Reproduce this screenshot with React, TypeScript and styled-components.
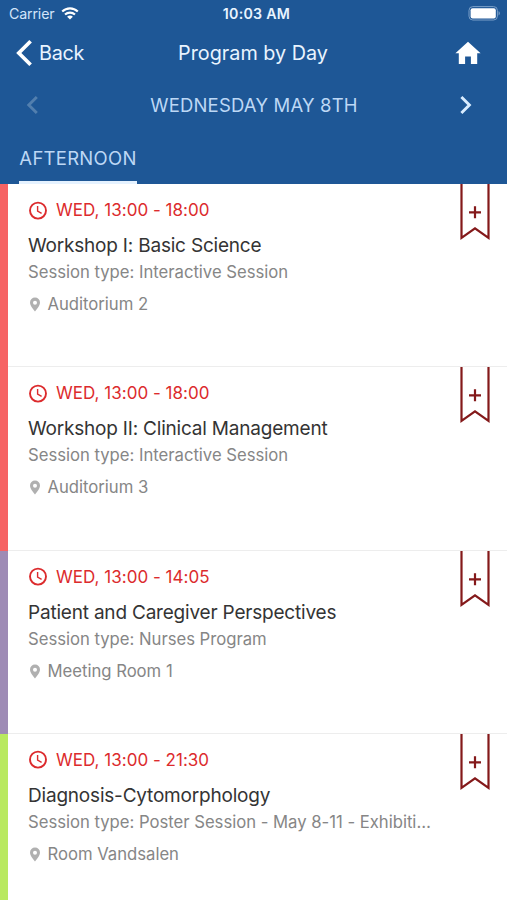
import React from "react";
import styled, { createGlobalStyle } from "styled-components";

const GlobalStyle = createGlobalStyle`
  * { box-sizing: border-box; }
  body {
    margin: 0;
    background: #fff;
    font-family: Inter, "Open Sans", sans-serif;
    font-kerning: normal;
  }
  h1, h2, p { margin: 0; font-weight: 400; }
  button { margin: 0; padding: 0; border: 0; background: none; font: inherit; color: inherit; }
  svg { display: block; flex: none; }
`;

const Screen = styled.main`
  width: 507px;
  height: 900px;
  overflow: hidden;
  display: flex;
  flex-direction: column;
  background: #fff;
`;

const Header = styled.header`
  flex: none;
  height: 184px;
  display: flex;
  flex-direction: column;
  background: #1e5796;
  color: #e9f4ff;
`;

const StatusBar = styled.div`
  height: 27px;
  padding: 0 7px 0 9px;
  display: grid;
  grid-template-columns: 1fr auto 1fr;
  align-items: center;
  font-size: 14.2px;
`;

const Carrier = styled.div`
  display: flex;
  align-items: center;
  gap: 7px;
  letter-spacing: -0.15px;
  color: #d3e5fa;
`;

const Clock = styled.div`
  padding-left: 4px;
  font-weight: 600;
  letter-spacing: 0.28px;
`;

const Battery = styled.div`
  justify-self: end;
`;

const NavBar = styled.div`
  height: 51px;
  padding: 0 26px 0 16px;
  display: grid;
  grid-template-columns: 1fr auto 1fr;
  align-items: center;
  font-size: 19.8px;
`;

const BackButton = styled.button`
  display: flex;
  align-items: center;
  gap: 6px;
  letter-spacing: -0.3px;
`;

const ScreenTitle = styled.h1`
  font-size: 19.8px;
  line-height: 26px;
  padding-left: 9px;
`;

const HomeButton = styled.button`
  justify-self: end;
`;

const DayBar = styled.div`
  height: 54px;
  padding: 0 35px 0 26px;
  display: grid;
  grid-template-columns: 1fr auto 1fr;
  align-items: center;
`;

const DayName = styled.h2`
  padding-left: 10px;
  font-size: 18.5px;
  line-height: 24px;
  letter-spacing: 0.17px;
  color: #bdd8f5;
`;

const DayArrow = styled.button<{ $dim?: boolean }>`
  justify-self: ${(p) => (p.$dim ? "start" : "end")};
  color: ${(p) => (p.$dim ? "#527fae" : "#d9ecff")};
`;

const Tabs = styled.nav`
  flex: 1;
  padding-left: 19px;
  display: flex;
`;

const Tab = styled.button`
  width: 118px;
  padding-top: 3px;
  border-bottom: 3px solid #e5f2ff;
  font-size: 18.5px;
  letter-spacing: 0.27px;
  white-space: nowrap;
  color: #bdd8f5;
`;

const SessionRow = styled.article<{ $bar: string }>`
  position: relative;
  flex: none;
  height: 183.3px;
  display: flex;
  &::before {
    content: "";
    width: 8px;
    background: ${(p) => p.$bar};
  }
`;

const SessionBody = styled.div`
  flex: 1;
  min-width: 0;
  padding: 14px 70px 0 20px;
  border-bottom: 1px solid #ededed;
  white-space: nowrap;
`;

const Time = styled.div`
  height: 24px;
  display: flex;
  align-items: center;
  gap: 9px;
  font-size: 17px;
  letter-spacing: 0.02px;
  color: #dc2b2d;
`;

const SessionTitle = styled.h2`
  margin-top: 11px;
  font-size: 19px;
  line-height: 26px;
  letter-spacing: -0.2px;
  color: #343434;
`;

const SessionType = styled.p`
  font-size: 16.7px;
  line-height: 27px;
  letter-spacing: -0.02px;
  color: #868686;
`;

const Place = styled.p`
  margin-top: 6px;
  height: 24px;
  display: flex;
  align-items: center;
  gap: 6.5px;
  font-size: 16.7px;
  letter-spacing: -0.02px;
  color: #868686;
`;

const BookmarkButton = styled.button`
  position: absolute;
  top: 0;
  right: 16px;
`;

const WifiIcon = () => (
  <svg width="18" height="13" viewBox="0 0 18 13" fill="none" stroke="#fff" strokeWidth="2.1">
    <path d="M1.2 4.6C5.6.3 12.4.3 16.8 4.6" />
    <path d="M4 7.6c2.9-2.7 7.1-2.7 10 0" />
    <path d="M6.1 9.7c1.7-1.5 4.1-1.5 5.8 0L9 12.6z" fill="#fff" stroke="none" />
  </svg>
);

const BatteryIcon = () => (
  <svg width="32" height="15" viewBox="0 0 32 15">
    <rect x="1" y="0.6" width="28.4" height="13.4" rx="3.8" fill="none" stroke="#7a9fc8" strokeWidth="1" />
    <rect x="2.6" y="2.2" width="25.2" height="10.2" rx="2" fill="#fff" />
    <path d="M30.6 5.2c1.5.6 1.5 3.6 0 4.2z" fill="#8cadd0" />
  </svg>
);

const BackIcon = () => (
  <svg width="17" height="26" viewBox="0 0 17 26" fill="none" stroke="#fff" strokeWidth="3.7">
    <path d="M14.6 1.3 2.8 13l11.8 11.7" />
  </svg>
);

const HomeIcon = () => (
  <svg width="26" height="24" viewBox="0 0 26 24">
    <path d="M13 .8.4 12.2h3.4v10.9h6.3v-7.5h5.8v7.5h6.3V12.2h3.4z" fill="#fff" />
  </svg>
);

const ChevronIcon = ({ left }: { left?: boolean }) => (
  <svg width="13" height="20" viewBox="0 0 13 20" fill="none" stroke="currentColor" strokeWidth="2.9">
    <path d={left ? "M10.8 2 2.8 10l8 8" : "M2.4 2l8 8-8 8"} />
  </svg>
);

const ClockIcon = () => (
  <svg width="19" height="19" viewBox="0 0 19 19" fill="none" stroke="#dc2b2d">
    <circle cx="10" cy="9.6" r="8" strokeWidth="1.9" />
    <path d="M9.6 5v5l4 2.4" strokeWidth="1.4" />
  </svg>
);

const PinIcon = () => (
  <svg width="13" height="16" viewBox="0 0 13 16">
    <path
      d="M7 1.6a5 5 0 0 0-5 5c0 3.6 5 9 5 9s5-5.4 5-9a5 5 0 0 0-5-5zm0 3.1a2 2 0 1 1 0 4 2 2 0 0 1 0-4z"
      fill="#b0b0b0"
      fillRule="evenodd"
    />
  </svg>
);

const RibbonIcon = () => (
  <svg width="32" height="57" viewBox="0 0 32 57" fill="none" stroke="#84191a" strokeWidth="2.2">
    <path d="M2.5-2v55.9L16 44.3l13.5 9.6V-2" />
    <path d="M10 28.3h12M16 22.3v12" />
  </svg>
);

const sessions = [
  { bar: "#f66364", time: "WED, 13:00 - 18:00", title: "Workshop I: Basic Science", type: "Interactive Session", place: "Auditorium 2" },
  { bar: "#f66364", time: "WED, 13:00 - 18:00", title: "Workshop II: Clinical Management", type: "Interactive Session", place: "Auditorium 3" },
  { bar: "#9e8bb5", time: "WED, 13:00 - 14:05", title: "Patient and Caregiver Perspectives", type: "Nurses Program", place: "Meeting Room 1" },
  { bar: "#b9e960", time: "WED, 13:00 - 21:30", title: "Diagnosis-Cytomorphology", type: "Poster Session - May 8-11 - Exhibiti…", place: "Room Vandsalen" },
];

export default function App() {
  return (
    <Screen>
      <GlobalStyle />
      <Header>
        <StatusBar>
          <Carrier>
            Carrier <WifiIcon />
          </Carrier>
          <Clock>10:03 AM</Clock>
          <Battery>
            <BatteryIcon />
          </Battery>
        </StatusBar>
        <NavBar>
          <BackButton>
            <BackIcon />
            Back
          </BackButton>
          <ScreenTitle>Program by Day</ScreenTitle>
          <HomeButton aria-label="Home">
            <HomeIcon />
          </HomeButton>
        </NavBar>
        <DayBar>
          <DayArrow $dim aria-label="Previous day">
            <ChevronIcon left />
          </DayArrow>
          <DayName>WEDNESDAY MAY 8TH</DayName>
          <DayArrow aria-label="Next day">
            <ChevronIcon />
          </DayArrow>
        </DayBar>
        <Tabs>
          <Tab>AFTERNOON</Tab>
        </Tabs>
      </Header>
      {sessions.map((s) => (
        <SessionRow key={s.title} $bar={s.bar}>
          <SessionBody>
            <Time>
              <ClockIcon />
              {s.time}
            </Time>
            <SessionTitle>{s.title}</SessionTitle>
            <SessionType>Session type: {s.type}</SessionType>
            <Place>
              <PinIcon />
              {s.place}
            </Place>
          </SessionBody>
          <BookmarkButton aria-label="Bookmark session">
            <RibbonIcon />
          </BookmarkButton>
        </SessionRow>
      ))}
    </Screen>
  );
}
